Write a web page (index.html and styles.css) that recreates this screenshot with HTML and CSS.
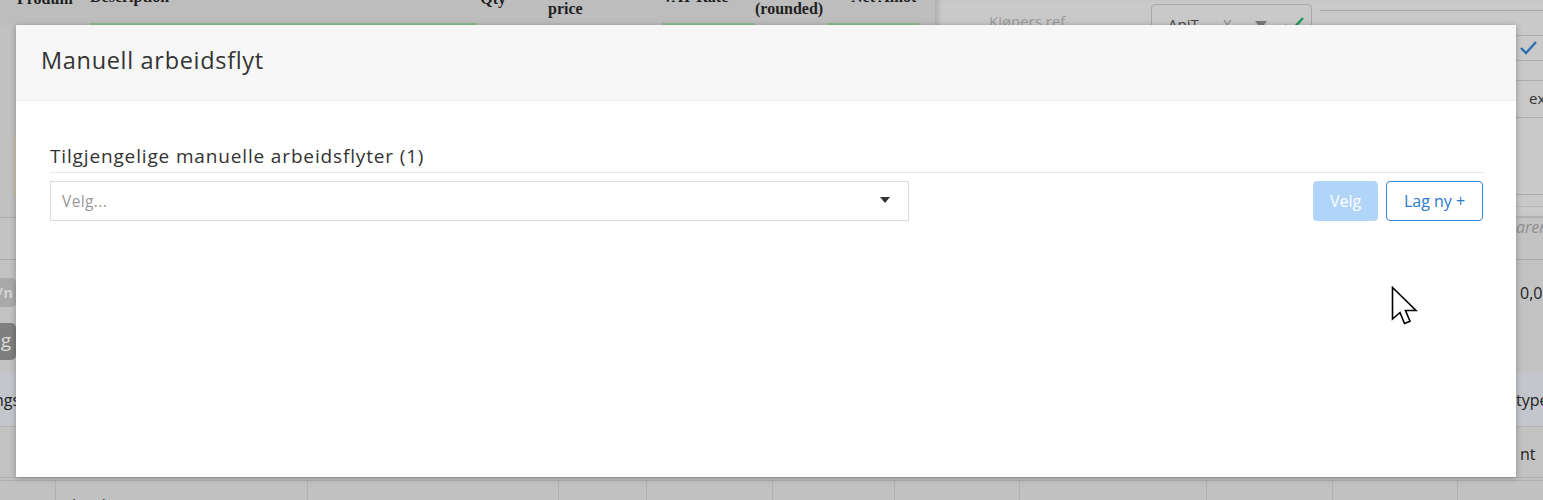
FILE: index.html
```html
<!DOCTYPE html>
<html lang="no">
<head>
<meta charset="utf-8">
<title>Manuell arbeidsflyt</title>
<link rel="stylesheet" href="styles.css">
</head>
<body>
<div class="page">
  <div class="top">
    <div class="top-left">
      <div class="thead">
        <div class="th c-prod single">Produm</div>
        <div class="th c-desc single green">Description</div>
        <div class="th c-qty single">Qty</div>
        <div class="th c-price double">Unit<br>price</div>
        <div class="th c-vat single green">VAT Rate</div>
        <div class="th c-round double">Amount<br>(rounded)</div>
        <div class="th c-net single green">Net Amot</div>
      </div>
      <div class="stripe"></div>
    </div>
    <div class="top-right">
      <div class="ref-row">
        <span class="ref-label">Kjøpers ref</span>
        <div class="ref-select">
          <span class="ref-val">ApiT</span>
          <span class="ref-x">X</span>
          <span class="ref-caret"></span>
          <svg class="ref-check" width="22" height="18" viewBox="0 0 22 18"><path d="M2 10 L8 16 L20 3" fill="none" stroke="#1f9a55" stroke-width="2.4"/></svg>
        </div>
        <div class="ref-line"></div>
      </div>
      <div class="side-box check-box">
        <svg width="20" height="16" viewBox="0 0 20 16"><path d="M2 8 L7 13 L17 2" fill="none" stroke="#2f6fb3" stroke-width="2.4"/></svg>
      </div>
      <div class="side-box ex-box">ex</div>
      <div class="side-lines"></div>
    </div>
  </div>
  <div class="band">
    <span class="band-right">arer</span>
  </div>
  <div class="pills">
    <div class="clip-left">
      <span class="pill light">Y/n</span>
      <span class="pill dark">Lag</span>
    </div>
    <span class="amount">0,0</span>
  </div>
  <div class="blue-band">
    <div class="clip-left"><span class="bl">Innstillings</span></div>
    <span class="br">type</span>
  </div>
  <div class="row-nt">
    <span class="br">nt</span>
  </div>
  <div class="bottom-row">
    <div class="bc w55"></div>
    <div class="bc w252">Ekstid</div>
    <div class="bc w251"></div>
    <div class="bc w88 r">1</div>
    <div class="bc w126 r">95,00</div>
    <div class="bc w122 r">190,00</div>
    <div class="bc w125 r">95</div>
    <div class="bc w187 r">185,00</div>
    <div class="bc w126"></div>
    <div class="bc w125"></div>
    <div class="bc last">1</div>
  </div>
</div>

<div class="modal">
  <div class="modal-header">
    <h2 class="modal-title">Manuell arbeidsflyt</h2>
  </div>
  <div class="modal-body">
    <div class="section-title">Tilgjengelige manuelle arbeidsflyter (1)</div>
    <div class="controls">
      <div class="select">
        <span class="placeholder">Velg...</span>
        <span class="caret"></span>
      </div>
      <div class="buttons">
        <button class="btn btn-primary" disabled>Velg</button>
        <button class="btn btn-outline">Lag ny +</button>
      </div>
    </div>
  </div>
</div>

<svg class="cursor" width="27" height="40" viewBox="0 0 27 40">
  <path d="M1.5 1.5 L1.5 33 L9 26.5 L13.5 37.5 L19 35.2 L14.5 24.5 L25 24.5 Z" fill="#fff" stroke="#000" stroke-width="1.6" stroke-linejoin="miter"/>
</svg>
</body>
</html>
```

FILE: styles.css
```css
* { box-sizing: border-box; }
html, body { margin: 0; padding: 0; }
body {
  width: 1543px;
  height: 500px;
  overflow: hidden;
  position: relative;
  background: #c2c2c2;
  font-family: "Open Sans", "Liberation Sans", sans-serif;
}

.page {
  display: grid;
  grid-template-rows: 217px 43px 113px 54px 50px 23px;
  height: 500px;
}

/* top area */
.top {
  display: grid;
  grid-template-columns: 935px 608px;
}
.top-left { background: #c1c1c1; overflow: hidden; }
.thead {
  display: flex;
  height: 25px;
  align-items: flex-end;
  background: #bdbdbd;
  overflow: hidden;
  font-family: "Liberation Serif", serif;
  font-weight: bold;
  font-size: 16px;
  line-height: 17px;
  color: #1f1f1f;
}
.th { height: 25px; display: flex; flex-direction: column; justify-content: flex-end; white-space: nowrap; }
.th.single { padding-bottom: 18px; }
.th.double { padding-bottom: 8px; }
.th.green { border-bottom: 2px solid #90bd8e; }
.c-prod { width: 90px; padding-left: 17px; }
.c-desc { width: 387px; }
.c-qty { width: 71px; align-items: flex-end; padding-right: 42px; }
.c-price { width: 114px; }
.c-vat { width: 93px; }
.c-round { width: 72px; }
.c-net { width: 92px; padding-left: 24px; }
.stripe {
  width: 2px;
  height: 60px;
  margin: 112px 0 0 14px;
  background: #cbc4a8;
}

.top-right {
  background: #c9c9c9;
  box-shadow: inset 6px 0 6px -4px rgba(0,0,0,0.18);
  display: flex;
  flex-direction: column;
  border-bottom: 1px solid #b2b2b2;
}
.ref-row { display: flex; align-items: flex-start; height: 35px; }
.ref-label {
  margin: 11px 0 0 54px;
  width: 162px;
  font-size: 15px;
  color: #999;
}
.ref-select {
  margin-top: 4px;
  width: 161px;
  height: 40px;
  border: 1px solid #a9a9a9;
  border-radius: 4px;
  display: flex;
  align-items: flex-start;
  padding: 9px 0 0 16px;
  font-size: 15px;
  color: #444;
}
.ref-val { width: 55px; }
.ref-x { width: 32px; color: #8a8a8a; }
.ref-caret {
  width: 0; height: 0;
  border-left: 6px solid transparent;
  border-right: 6px solid transparent;
  border-top: 8px solid #7a7a7a;
  margin: 7px 16px 0 0;
}
.ref-check { margin-top: 1px; }
.ref-line { margin: 10px 0 0 8px; flex: 1; border-top: 1px solid #a8a8a8; }
.side-box {
  margin-left: 580px;
  border: 1px solid #aeaeae;
  border-right: 0;
  border-radius: 3px 0 0 3px;
  width: 28px;
}
.check-box { height: 26px; display: flex; align-items: center; padding-left: 3px; }
.ex-box { height: 38px; margin-top: 19px; font-size: 15px; color: #333; padding: 7px 0 0 13px; }
.side-lines {
  margin-top: 76px;
  height: 13px;
  margin-left: 580px;
  border-top: 1px solid #aaa;
  border-bottom: 1px solid #b6b6b6;
}

.band {
  background: #c3c3c3;
  border-top: 1px solid #adadad;
  border-bottom: 1px solid #a9a9a9;
  display: flex;
  justify-content: flex-end;
}
.band-right { font-style: italic; color: #8f8f8f; font-size: 16px; margin: -2px -10px 0 0; width: 37px; overflow: hidden; }

.pills { display: flex; justify-content: space-between; background: #c2c2c2; }
.clip-left {
  width: 16px;
  overflow: hidden;
  display: flex;
  flex-direction: column;
  align-items: flex-end;
}
.pill {
  display: block;
  flex-shrink: 0;
  white-space: nowrap;
  border-radius: 5px;
}
.pill.light {
  background: #a9a9a9;
  color: #d3d3d3;
  height: 29px;
  line-height: 29px;
  margin-top: 18px;
  padding: 0 3px 0 10px;
  font-weight: bold;
  font-size: 15px;
}
.pill.dark {
  background: #7f7f7f;
  color: #dadada;
  height: 37px;
  line-height: 34px;
  margin-top: 16px;
  padding: 0 5px 0 10px;
  font-size: 19px;
}
.amount { font-size: 16px; color: #222; margin: 22px -4px 0 0; width: 27px; overflow: hidden; }

.blue-band {
  background: #c3c6ca;
  border-bottom: 1px solid #b4b4b4;
  display: flex;
  justify-content: space-between;
  align-items: center;
  font-size: 16px;
  color: #222;
}
.blue-band .clip-left { flex-direction: row; justify-content: flex-end; }
.bl { flex-shrink: 0; white-space: nowrap; margin-right: -4px; }
.br { margin-right: -8px; width: 35px; overflow: hidden; }
.row-nt {
  background: #c2c2c2;
  display: flex;
  justify-content: flex-end;
  align-items: center;
  font-size: 16px;
  color: #222;
}
.row-nt .br { margin-right: -14px; width: 37px; margin-top: 4px; }

.bottom-row {
  display: flex;
  background: #c1c1c1;
  border-top: 4px double #aeaeae;
  font-size: 15px;
  color: #222;
  overflow: hidden;
}
.bc { border-right: 1px solid #b0b0b0; padding: 13px 8px 0; white-space: nowrap; }
.bc.r { text-align: right; }
.w55 { width: 56px; }
.w252 { width: 252px; }
.w251 { width: 251px; }
.w88 { width: 88px; }
.w126 { width: 126px; }
.w122 { width: 122px; }
.w125 { width: 125px; }
.w187 { width: 187px; }
.bc.last { flex: 1; border-right: 0; }

/* modal */
.modal {
  position: absolute;
  left: 16px;
  top: 25px;
  width: 1500px;
  height: 452px;
  background: #fff;
  box-shadow: 0 1px 6px rgba(0,0,0,0.28);
}
.modal-header {
  height: 76px;
  background: #f7f7f7;
  border-bottom: 1px solid #ececec;
  display: flex;
  align-items: center;
  padding-left: 25px;
}
.modal-title {
  margin: 0 0 6px;
  font-family: "Open Sans", sans-serif;
  font-weight: normal;
  font-size: 23.5px;
  letter-spacing: 0.68px;
  color: #333;
}
.modal-body { padding: 42px 33px 0 34px; }
.section-title {
  font-size: 19px;
  letter-spacing: 0.85px;
  color: #333;
  line-height: 26px;
  padding-bottom: 3px;
  border-bottom: 1px solid #e8e8e8;
}
.controls {
  display: flex;
  justify-content: space-between;
  margin-top: 8px;
}
.select {
  width: 859px;
  height: 40px;
  border: 1px solid #dcdcdc;
  display: flex;
  align-items: center;
  justify-content: space-between;
  padding: 0 18px 0 11px;
}
.placeholder { font-size: 15.5px; letter-spacing: 0.4px; color: #999; }
.caret {
  width: 0; height: 0;
  border-left: 5px solid transparent;
  border-right: 5px solid transparent;
  border-top: 6px solid #333;
  margin-top: -2px;
}
.buttons { display: flex; gap: 8px; }
.btn {
  height: 40px;
  border-radius: 4px;
  font-family: "Open Sans", sans-serif;
  font-size: 16px;
  padding: 0;
  cursor: pointer;
}
.btn-primary {
  width: 65px;
  background: #b1d5f8;
  border: 1px solid #b1d5f8;
  color: #fff;
}
.btn-outline {
  width: 97px;
  background: #fff;
  border: 1px solid #3a86d4;
  color: #2c78cc;
}

.cursor {
  position: absolute;
  left: 1391px;
  top: 286px;
}
```
